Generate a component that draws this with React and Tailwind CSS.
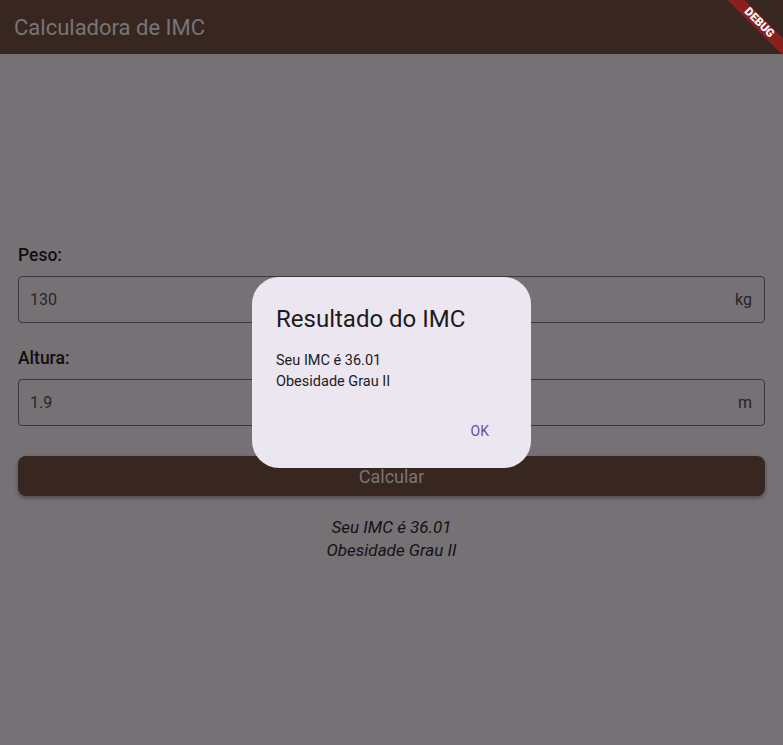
export default function App() {
  const font = { fontFamily: "Roboto, 'Noto Sans', sans-serif" };
  return (
    <div className="relative w-[783px] h-[745px] overflow-hidden bg-[#757175]" style={font}>
      <header className="h-[54px] bg-[#382721] flex items-center pl-[14px]">
        <h1 className="text-[22px] text-[#777576] font-normal tracking-[0]">Calculadora de IMC</h1>
      </header>

      <main className="px-[18px] pt-[190px] flex flex-col">
        <label className="text-[17.5px] font-medium leading-[22px] text-[#100e11]">Peso:</label>
        <div className="mt-[10px] h-[47px] rounded-[4px] border border-[#3a363b] flex items-center justify-between pl-[11px] pr-[12px]">
          <span className="text-[16px] text-[#2a2629]">130</span>
          <span className="text-[16px] text-[#262327]">kg</span>
        </div>

        <label className="mt-[24px] text-[17.5px] font-medium leading-[22px] text-[#100e11]">Altura:</label>
        <div className="mt-[10px] h-[47px] rounded-[4px] border border-[#3a363b] flex items-center justify-between pl-[11px] pr-[12px]">
          <span className="text-[16px] text-[#2a2629]">1.9</span>
          <span className="text-[16px] text-[#262327]">m</span>
        </div>

        <button className="mt-[30px] h-[40px] rounded-[8px] bg-[#382721] shadow-[0_2px_4px_rgba(0,0,0,0.35)] flex items-center justify-center">
          <span className="text-[18px] text-[#787574]">Calcular</span>
        </button>

        <div className="mt-[20px] flex flex-col items-center italic text-[17px] leading-[23px] text-[#141215]">
          <span>Seu IMC é 36.01</span>
          <span>Obesidade Grau II</span>
        </div>
      </main>

      {/* Debug banner */}
      <div className="absolute top-0 right-0 w-[64px] h-[64px] overflow-hidden pointer-events-none">
        <div className="absolute left-[1px] top-[17px] w-[78px] h-[12px] rotate-45 bg-[#b71c1ca0] flex items-center justify-center">
          <span className="text-[11.5px] font-black leading-none text-white tracking-[0]">DEBUG</span>
        </div>
      </div>

      {/* Dialog */}
      <div className="absolute inset-0 flex items-center justify-center">
        <div className="w-[279px] h-[191px] rounded-[27px] bg-[#ece6f0] pl-[24px] pr-[42px] pt-[28px] flex flex-col">
          <h2 className="text-[24px] leading-[28px] text-[#1d1b20] font-normal">Resultado do IMC</h2>
          <div className="mt-[17px] text-[14.5px] leading-[21px] text-[#1d1b20]">
            <p>Seu IMC é 36.01</p>
            <p>Obesidade Grau II</p>
          </div>
          <div className="mt-[29px] flex justify-end">
            <span className="text-[14px] leading-[20px] text-[#6750a4]">OK</span>
          </div>
        </div>
      </div>
    </div>
  );
}
